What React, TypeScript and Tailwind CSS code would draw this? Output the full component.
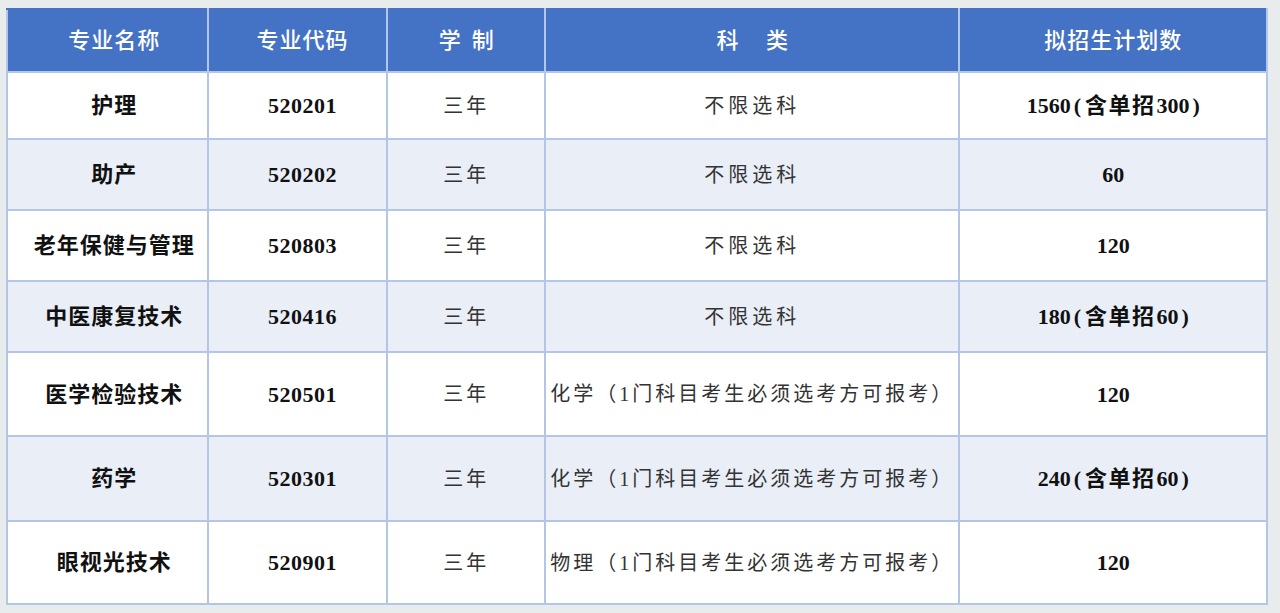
import React from "react";

const rows = [
  { name: "护理", code: "520201", years: "三年", subject: "不限选科", plan: "1560(含单招300)", h: "h-[67px]" },
  { name: "助产", code: "520202", years: "三年", subject: "不限选科", plan: "60", h: "h-[71px]" },
  { name: "老年保健与管理", code: "520803", years: "三年", subject: "不限选科", plan: "120", h: "h-[71px]" },
  { name: "中医康复技术", code: "520416", years: "三年", subject: "不限选科", plan: "180(含单招60)", h: "h-[71px]" },
  { name: "医学检验技术", code: "520501", years: "三年", subject: "化学（1门科目考生必须选考方可报考）", plan: "120", h: "h-[84px]" },
  { name: "药学", code: "520301", years: "三年", subject: "化学（1门科目考生必须选考方可报考）", plan: "240(含单招60)", h: "h-[85px]" },
  { name: "眼视光技术", code: "520901", years: "三年", subject: "物理（1门科目考生必须选考方可报考）", plan: "120", h: "h-[83px]" },
];

const cell = "border-2 border-[#b4c6e7] text-center align-middle";

// wide-looking parentheses as in the source sheet
function Plan({ text }: { text: string }) {
  const parts = text.split(/([()]|[\u4e00-\u9fff]+)/).filter(Boolean);
  return (
    <>
      {parts.map((p, i) => {
        if (p === "(") return <span key={i} className="ml-[3px] mr-[4px]">(</span>;
        if (p === ")") return <span key={i} className="ml-[3px]">)</span>;
        if (/[\u4e00-\u9fff]/.test(p))
          return (
            <span key={i} className="tracking-[1.5px] mr-[1px]">
              {p}
            </span>
          );
        return <span key={i}>{p}</span>;
      })}
    </>
  );
}

export default function App() {
  return (
    <div
      className="w-[1280px] h-[613px] bg-[#e9ecec] pt-[8px] pl-[6px]"
      style={{ fontFamily: '"Liberation Serif", "Noto Sans CJK SC", serif' }}
    >
      <table className="w-[1262px] border-collapse border-2 border-[#4472c4] bg-white text-[#111]">
        <colgroup>
          <col className="w-[201px]" />
          <col className="w-[180px]" />
          <col className="w-[158px]" />
          <col className="w-[415px]" />
          <col className="w-[308px]" />
        </colgroup>
        <thead>
          <tr className="h-[63px] bg-[#4472c4] text-white text-[22px]">
            <th className={`${cell} border-t-[#4472c4] font-medium tracking-[1px] pl-[14px]`}>专业名称</th>
            <th className={`${cell} border-t-[#4472c4] font-medium tracking-[1px] pl-[10px]`}>专业代码</th>
            <th className={`${cell} border-t-[#4472c4] font-medium whitespace-pre`}>学  制</th>
            <th className={`${cell} border-t-[#4472c4] font-medium whitespace-pre`}>科　 类</th>
            <th className={`${cell} border-t-[#4472c4] font-medium tracking-[1px]`}>拟招生计划数</th>
          </tr>
        </thead>
        <tbody>
          {rows.map((r, i) => (
            <tr key={r.code} className={`${r.h} ${i % 2 === 1 ? "bg-[#e9eef7]" : "bg-white"}`}>
              <td className={`${cell} text-[22px] font-bold tracking-[1px] pl-[14px]`}>{r.name}</td>
              <td className={`${cell} text-[22px] font-bold tracking-[0.5px] pl-[10px]`}>{r.code}</td>
              <td className={`${cell} text-[20px] font-normal tracking-[3px] text-[#333]`}>{r.years}</td>
              <td
                className={`${cell} text-[20px] font-normal text-[#333] ${
                  r.subject.length > 4 ? "tracking-[3px]" : "tracking-[4px]"
                }`}
              >
                {r.subject}
              </td>
              <td className={`${cell} text-[22px] font-bold`}>
                <Plan text={r.plan} />
              </td>
            </tr>
          ))}
        </tbody>
      </table>
    </div>
  );
}
